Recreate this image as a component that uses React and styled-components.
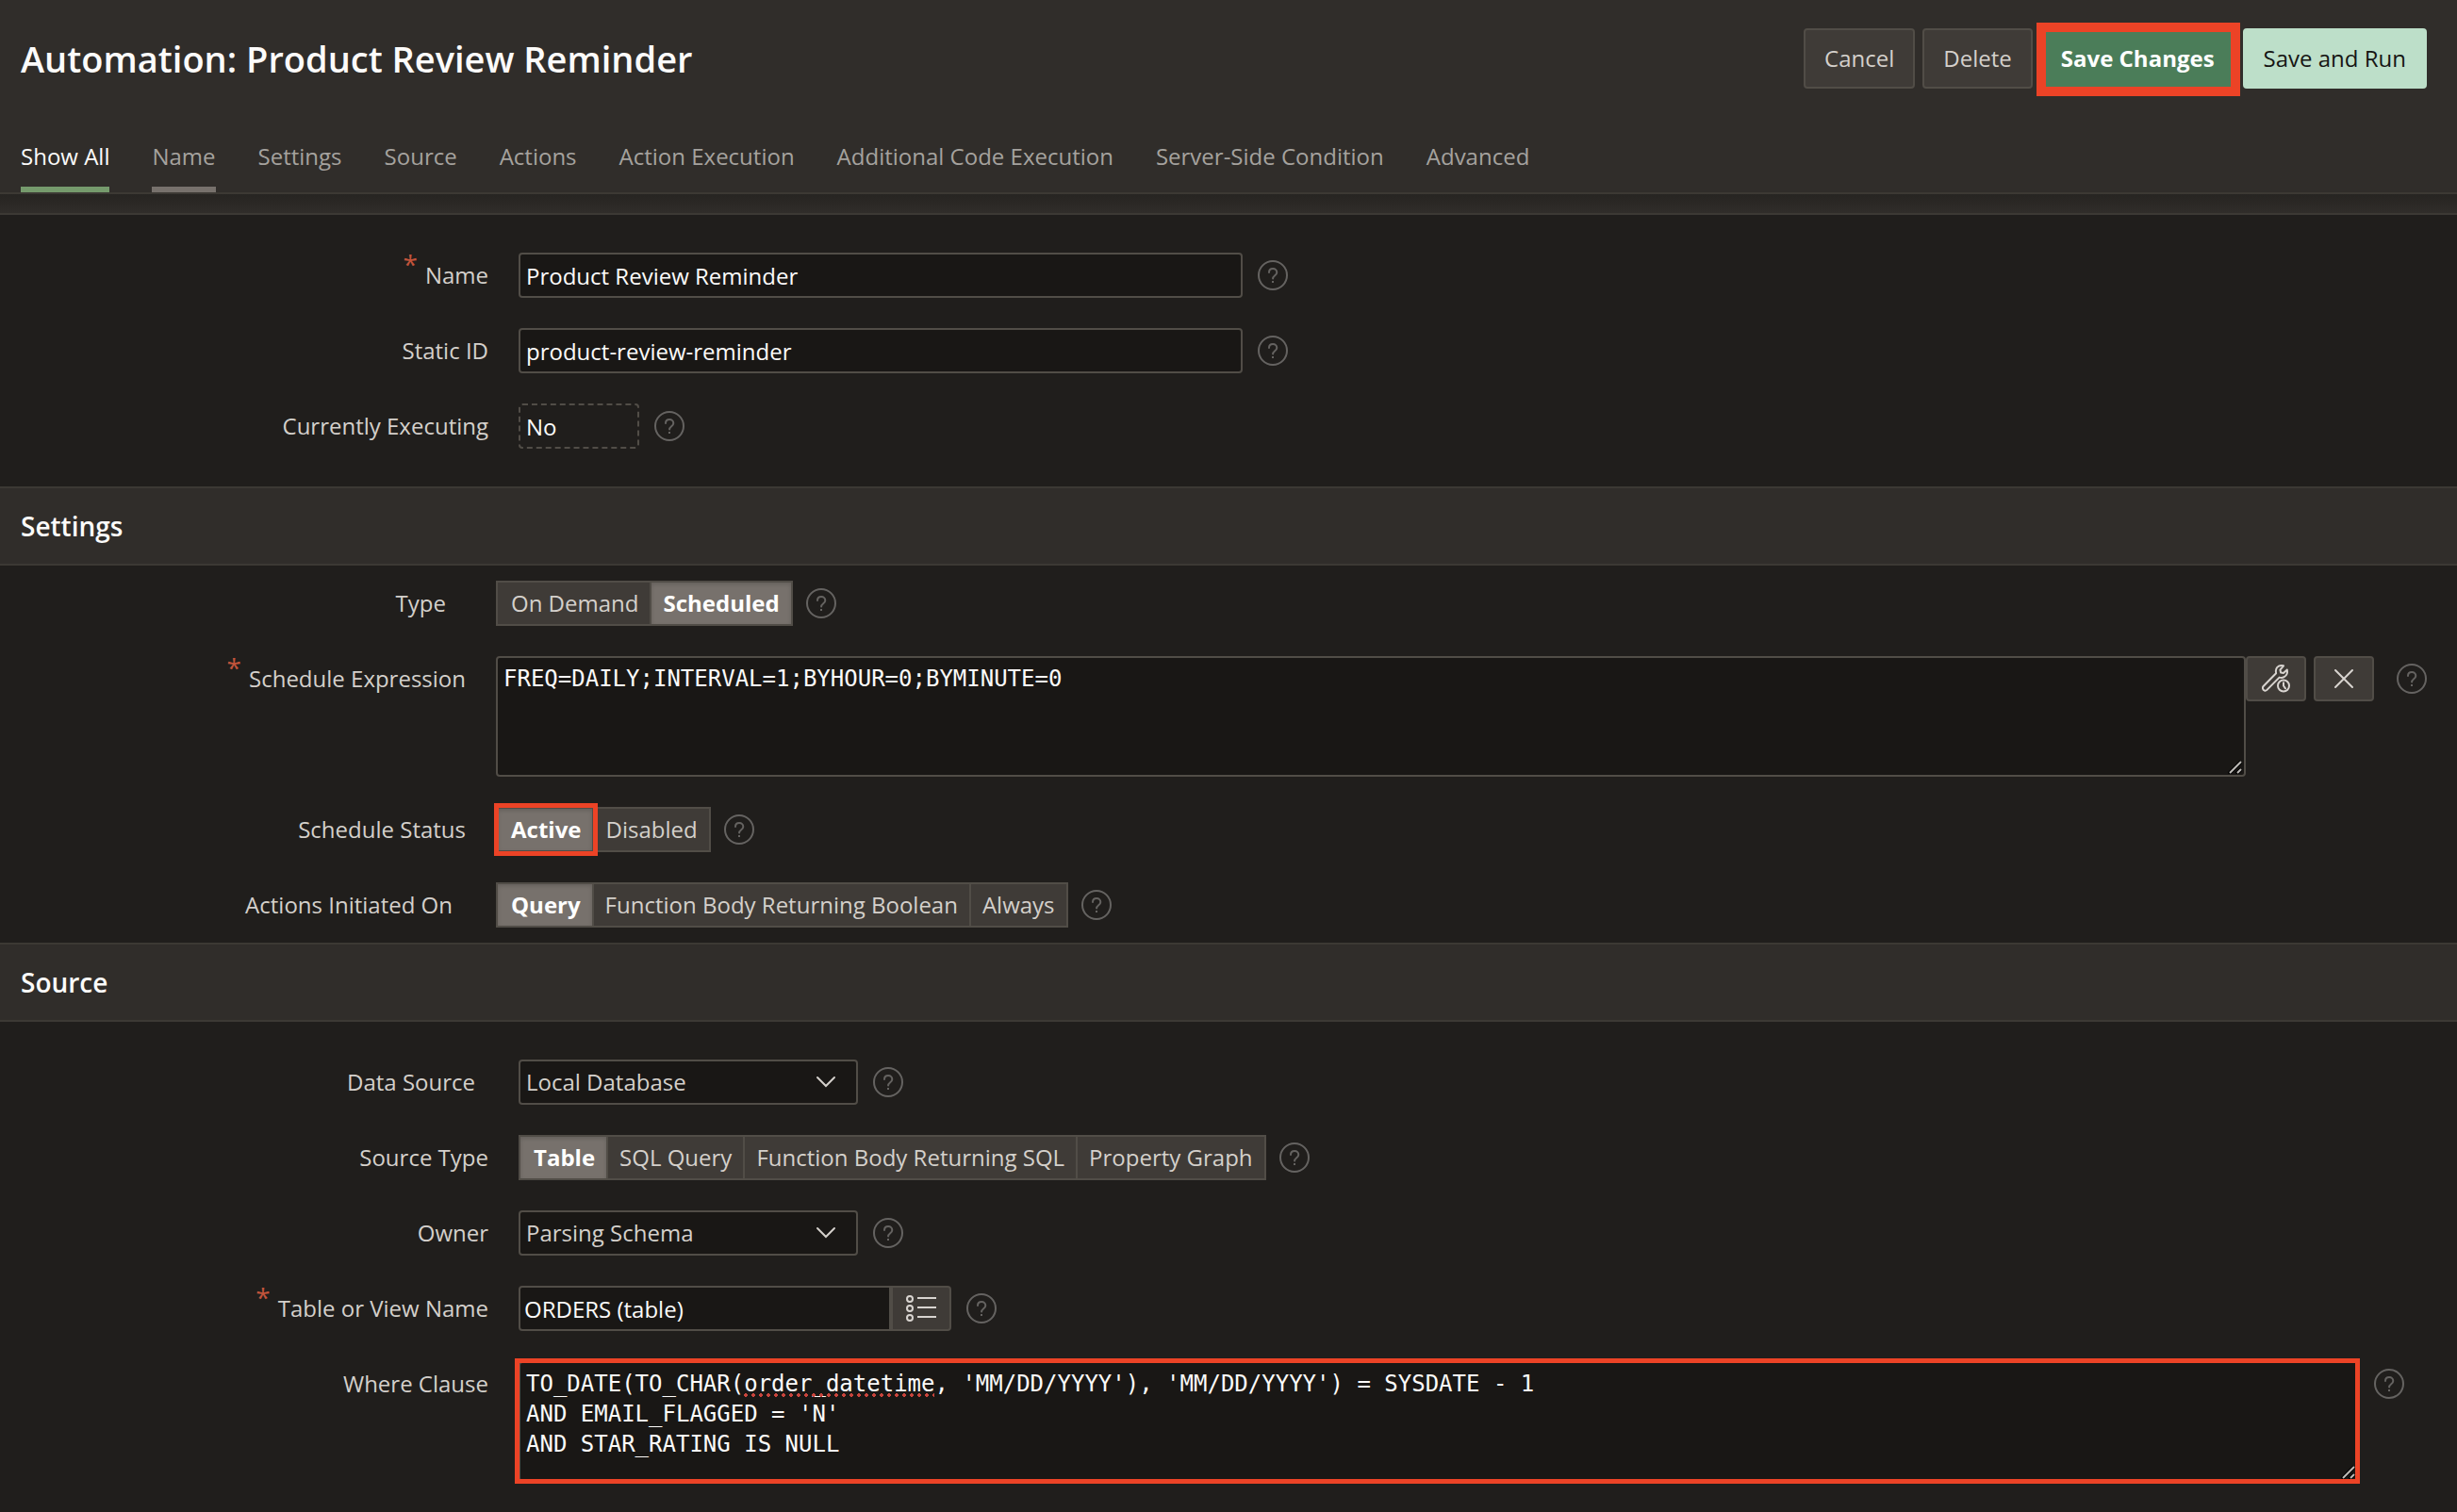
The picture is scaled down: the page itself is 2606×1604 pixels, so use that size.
import React, { useState } from "react";
import styled, { createGlobalStyle } from "styled-components";

const c = {
  header: "#302d2a",
  body: "#201e1c",
  field: "#191715",
  line: "#3c3934",
  border: "#514d47",
  button: "#3f3b37",
  text: "#d4d0cb",
  muted: "#a5a29e",
  bright: "#fcfbfa",
  help: "#656361",
  red: "#ec4326",
};

const GlobalStyle = createGlobalStyle`
  *, *::before, *::after { box-sizing: border-box; }
  body {
    margin: 0;
    background: ${c.body};
    color: ${c.text};
    font: 24px/32px "Open Sans", "Noto Sans", sans-serif;
  }
  button, input, select, textarea { font: inherit; color: inherit; margin: 0; }
`;

const Header = styled.header`
  background: ${c.header};
  border-bottom: 2px solid ${c.line};
`;

const TitleBar = styled.div`
  display: flex;
  align-items: center;
  justify-content: space-between;
  padding: 30px 32px 32px 22px;
`;

const Title = styled.h1`
  margin: 0;
  font-size: 38px;
  line-height: 56px;
  font-weight: 600;
  color: ${c.bright};
`;

const ButtonRow = styled.div`
  display: flex;
  gap: 8px;
`;

const looks = {
  plain: `background: ${c.button}; border-color: ${c.border}; color: ${c.text};`,
  primary: `background: #4b7d59; border-color: #4b7d59; color: #fff; font-weight: 700;`,
  soft: `background: #bddfc9; border-color: #bddfc9; color: #161513;`,
};

const ActionButton = styled.button`
  height: 64px;
  padding: 0 20px;
  border: 2px solid;
  border-radius: 4px;
  ${(p) => looks[p.$look || "plain"]}
`;

const Highlight = styled.span`
  position: relative;
  display: flex;
  flex: ${(p) => (p.$grow ? "1" : "none")};
  &::after {
    content: "";
    position: absolute;
    inset: ${(p) => p.$inset};
    border: ${(p) => p.$border} solid ${c.red};
    pointer-events: none;
  }
`;

const Tabs = styled.nav`
  display: flex;
  gap: 45px;
  padding: 0 22px;
`;

const Tab = styled.a`
  height: 78px;
  padding-top: 24px;
  border-bottom: 6px solid ${(p) => p.$bar || "transparent"};
  color: ${(p) => (p.$current ? c.bright : c.muted)};
  text-decoration: none;
  white-space: nowrap;
`;

const HeaderShade = styled.div`
  height: 22px;
  background: linear-gradient(#262421, ${c.header});
  border-bottom: 2px solid ${c.line};
`;

const SectionTitle = styled.h2`
  margin: 0;
  padding: 22px;
  background: ${c.header};
  border: solid ${c.line};
  border-width: 2px 0;
  color: ${c.bright};
  font-size: 28px;
  line-height: 36px;
  font-weight: 600;
`;

const Fields = styled.div`
  display: flex;
  flex-direction: column;
  gap: 32px;
  padding: ${(p) => (p.$tight ? "16px 0" : "40px 24px")};
`;

const Row = styled.div`
  display: flex;
  align-items: flex-start;
  padding-right: 32px;
`;

const LabelCell = styled.div`
  flex: 0 0 526px;
  display: flex;
  justify-content: flex-end;
  gap: 8px;
  padding: 8px ${(p) => 32 + (p.$trail || 0)}px 8px 0;
`;

const Required = styled.span`
  color: #c2543b;
  font-size: 28px;
  line-height: 8px;
`;

const box = `
  height: 48px;
  padding: 0 6px;
  border: 2px solid ${c.border};
  border-radius: 4px;
  background: ${c.field};
`;

const TextInput = styled.input`
  ${box}
  width: ${(p) => p.$width}px;
  color: ${c.bright};
  outline: none;
`;

const ReadOnlyInput = styled(TextInput)`
  border-style: dashed;
  background: transparent;
`;

const LookupInput = styled(TextInput)`
  padding: 0 4px;
  border-radius: 4px 0 0 4px;
`;

const SelectWrap = styled.span`
  position: relative;
  width: 360px;
  svg { position: absolute; right: 22px; top: 16px; pointer-events: none; }
`;

const Select = styled.select`
  ${box}
  width: 100%;
  appearance: none;
  color: ${c.text};
`;

const AreaWrap = styled.span`
  position: relative;
  flex: 1;
  display: flex;
  font-family: "DejaVu Sans Mono", monospace;
  svg { position: absolute; right: 4px; bottom: 3px; pointer-events: none; }
`;

const Area = styled.textarea`
  ${box}
  flex: 1;
  height: 128px;
  padding: 6px;
  color: ${c.bright};
  line-height: 32px;
  resize: none;
  outline: none;
`;

const SpellMark = styled.span`
  position: absolute;
  left: calc(8px + ${(p) => p.$from}ch);
  width: ${(p) => p.$length}ch;
  top: 34px;
  height: 4px;
  background: radial-gradient(circle at 2px 2px, #c8443c 2px, transparent 2px) 0 0 / 8px 4px repeat-x;
  pointer-events: none;
`;

const IconButton = styled.button`
  display: grid;
  place-items: center;
  width: 64px;
  height: 48px;
  padding: 0;
  margin-left: ${(p) => (p.$gap ? 8 : 0)}px;
  border: 2px solid ${c.border};
  border-radius: ${(p) => (p.$joined ? "0 4px 4px 0" : "4px")};
  background: ${c.button};
`;

const HelpButton = styled.button`
  flex: none;
  width: 32px;
  height: 32px;
  margin: 8px 0 8px ${(p) => p.$gap}px;
  padding: 0;
  border: 0;
  background: none;
  color: ${c.help};
  svg { display: block; }
`;

const Segments = styled.div`
  display: flex;
  border: 2px solid ${c.border};
`;

const Segment = styled.label`
  position: relative;
  display: block;
  height: 44px;
  padding: 6px 12px;
  border-left: 2px solid ${c.border};
  background: ${c.button};
  white-space: nowrap;
  &:first-child { border-left: 0; padding-left: 14px; }
  &:has(input:checked) {
    background: #77716c;
    color: #fff;
    font-weight: 700;
    box-shadow: inset 0 2px 4px rgba(0, 0, 0, 0.15);
  }
  input {
    position: absolute;
    inset: 0;
    margin: 0;
    opacity: 0;
  }
`;

const SegmentMark = styled.span`
  position: absolute;
  inset: -6px -6px -6px -4px;
  border: 5px solid ${c.red};
  z-index: 1;
  pointer-events: none;
`;

function Help({ about, gap = 16 }) {
  return (
    <HelpButton type="button" $gap={gap} aria-label={`Help: ${about}`}>
      <svg width="32" height="32" viewBox="0 0 32 32" fill="none" stroke="currentColor" strokeWidth="2">
        <circle cx="16" cy="16" r="15" />
        <path d="M12 13C12 10.600 13.700 9 16.100 9s4.200 1.700 4.200 4c0 3.200-4.200 3.300-4.200 6.600" strokeLinecap="round" />
        <path d="M16 22v2" />
      </svg>
    </HelpButton>
  );
}

function Chevron() {
  return (
    <svg width="24" height="16" viewBox="0 0 24 16" fill="none" stroke={c.text} strokeWidth="2" strokeLinecap="round">
      <path d="M3 3l9 9 9-9" />
    </svg>
  );
}

function Grip() {
  return (
    <svg width="15" height="15" viewBox="0 0 15 15" fill="none">
      <path d="M1 15L14 2M9 15l5-5" stroke="#000" strokeWidth="4" />
      <path d="M2 14L14 2M10 14l4-4" stroke="#bdbab6" strokeWidth="2" />
    </svg>
  );
}

function WrenchClock() {
  return (
    <svg width="32" height="32" viewBox="0 0 32 32" fill="none" stroke="#d8d4d0" strokeWidth="2" strokeLinecap="round" strokeLinejoin="round">
      <path d="M24 2.300c-3.500-1.200-7.400.7-8 4.200-.3 1.500-.2 2.500.1 3.700L2.600 24c-1.300 1.400-.7 4 1.200 4.600 1 .3 1.900 0 2.600-.7L19.600 14.600c1.600.5 3.500.4 5-.4 2.700-1.500 3.900-4.600 3.200-7.700L23.900 10l-2.800-.5-.7-2.900z" />
      <circle cx="24" cy="23.500" r="6" fill={c.button} />
      <path d="M24 20.200v3.300l2 2.800" />
    </svg>
  );
}

function Cross() {
  return (
    <svg width="22" height="22" viewBox="0 0 22 22" stroke="#d8d4d0" strokeWidth="2" strokeLinecap="round">
      <path d="M2 2l18 18M20 2L2 20" />
    </svg>
  );
}

function ListIcon() {
  return (
    <svg width="34" height="30" viewBox="0 0 34 30" fill="none" stroke="#d8d4d0" strokeWidth="2">
      {[5, 15, 25].map((y) => (
        <g key={y}>
          <circle cx="5" cy={y} r="3" />
          <path d={`M13 ${y - 1}h20`} />
        </g>
      ))}
    </svg>
  );
}

function Field({ id, label, required, trail, children, helpGap }) {
  return (
    <Row>
      <LabelCell $trail={trail}>
        {required && <Required aria-hidden="true">*</Required>}
        <label htmlFor={id} id={`${id}-label`}>{label}</label>
      </LabelCell>
      {children}
      <Help about={label} gap={helpGap} />
    </Row>
  );
}

function Choice({ id, options, initial, marked }) {
  const [value, setValue] = useState(initial);
  return (
    <Segments role="radiogroup" aria-labelledby={`${id}-label`}>
      {options.map((o, i) => (
        <Segment key={o}>
          <input
            type="radio"
            id={i === 0 ? id : `${id}-${i}`}
            name={id}
            checked={value === o}
            onChange={() => setValue(o)}
          />
          {o}
          {marked === o && <SegmentMark />}
        </Segment>
      ))}
    </Segments>
  );
}

const tabs = [
  "Show All", "Name", "Settings", "Source", "Actions", "Action Execution",
  "Additional Code Execution", "Server-Side Condition", "Advanced",
];
const bars = { "Show All": "#759a6c", Name: "#77716c" };

const where = `TO_DATE(TO_CHAR(order_datetime, 'MM/DD/YYYY'), 'MM/DD/YYYY') = SYSDATE - 1
AND EMAIL_FLAGGED = 'N'
AND STAR_RATING IS NULL`;

export default function App() {
  return (
    <>
      <GlobalStyle />
      <Header>
        <TitleBar>
          <Title>Automation: Product Review Reminder</Title>
          <ButtonRow>
            <ActionButton type="button">Cancel</ActionButton>
            <ActionButton type="button">Delete</ActionButton>
            <Highlight $inset="-6px -5px -8px -4px" $border="10px">
              <ActionButton type="button" $look="primary">Save Changes</ActionButton>
            </Highlight>
            <ActionButton type="button" $look="soft">Save and Run</ActionButton>
          </ButtonRow>
        </TitleBar>
        <Tabs aria-label="Sections">
          {tabs.map((t) => (
            <Tab key={t} href="#" $bar={bars[t]} $current={t === "Show All"}>{t}</Tab>
          ))}
        </Tabs>
      </Header>
      <HeaderShade />
      <main>
        <Fields>
          <Field id="name" label="Name" required>
            <TextInput id="name" $width={768} defaultValue="Product Review Reminder" />
          </Field>
          <Field id="static-id" label="Static ID">
            <TextInput id="static-id" $width={768} defaultValue="product-review-reminder" />
          </Field>
          <Field id="executing" label="Currently Executing">
            <ReadOnlyInput id="executing" $width={128} readOnly value="No" />
          </Field>
        </Fields>

        <SectionTitle>Settings</SectionTitle>
        <Fields $tight>
          <Field id="type" label="Type" trail={21} helpGap={14}>
            <Choice id="type" options={["On Demand", "Scheduled"]} initial="Scheduled" />
          </Field>
          <Field id="expression" label="Schedule Expression" required helpGap={24}>
            <AreaWrap>
              <Area id="expression" spellCheck={false} defaultValue="FREQ=DAILY;INTERVAL=1;BYHOUR=0;BYMINUTE=0" />
              <Grip />
            </AreaWrap>
            <IconButton type="button" aria-label="Build schedule"><WrenchClock /></IconButton>
            <IconButton type="button" aria-label="Clear schedule" $gap><Cross /></IconButton>
          </Field>
          <Field id="status" label="Schedule Status" helpGap={14}>
            <Choice id="status" options={["Active", "Disabled"]} initial="Active" marked="Active" />
          </Field>
          <Field id="initiated" label="Actions Initiated On" trail={14} helpGap={14}>
            <Choice id="initiated" options={["Query", "Function Body Returning Boolean", "Always"]} initial="Query" />
          </Field>
        </Fields>

        <SectionTitle>Source</SectionTitle>
        <Fields>
          <Field id="data-source" label="Data Source" trail={14}>
            <SelectWrap>
              <Select id="data-source"><option>Local Database</option></Select>
              <Chevron />
            </SelectWrap>
          </Field>
          <Field id="source-type" label="Source Type" helpGap={14}>
            <Choice id="source-type" options={["Table", "SQL Query", "Function Body Returning SQL", "Property Graph"]} initial="Table" />
          </Field>
          <Field id="owner" label="Owner">
            <SelectWrap>
              <Select id="owner"><option>Parsing Schema</option></Select>
              <Chevron />
            </SelectWrap>
          </Field>
          <Field id="table-name" label="Table or View Name" required>
            <LookupInput id="table-name" $width={395} defaultValue="ORDERS (table)" />
            <IconButton type="button" aria-label="Choose table" $joined><ListIcon /></IconButton>
          </Field>
          <Field id="where" label="Where Clause">
            <Highlight $grow $inset="-3px -1px -2px -4px" $border="5px">
              <AreaWrap>
                <Area id="where" spellCheck={false} defaultValue={where} />
                <SpellMark $from={16} $length={14} />
                <Grip />
              </AreaWrap>
            </Highlight>
          </Field>
        </Fields>
      </main>
    </>
  );
}
